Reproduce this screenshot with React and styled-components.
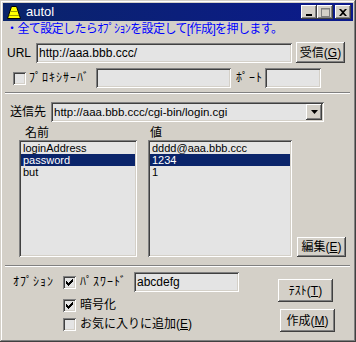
import React from 'react';
import styled, { createGlobalStyle, css } from 'styled-components';

const GlobalStyle = createGlobalStyle`
  html, body {
    margin: 0;
    padding: 0;
    background: #d4d0c8;
  }
  * {
    box-sizing: border-box;
  }
`;

const sunken = css`
  box-shadow: inset 1px 1px #808080, inset -1px -1px #ffffff,
    inset 2px 2px #404040, inset -2px -2px #d4d0c8;
`;

const raised = css`
  box-shadow: inset -1px -1px #404040, inset 1px 1px #ffffff,
    inset -2px -2px #808080, inset 2px 2px #d4d0c8;
`;

const Window = styled.div`
  width: 356px;
  height: 342px;
  padding: 3px;
  background: #d4d0c8;
  box-shadow: inset -1px -1px #404040, inset 1px 1px #d4d0c8,
    inset -2px -2px #808080, inset 2px 2px #ffffff;
  font-family: "Liberation Sans", "Noto Sans CJK JP", sans-serif;
  font-size: 12px;
  color: #000;
  display: flex;
  flex-direction: column;
`;

const TitleBar = styled.div`
  height: 18px;
  background: linear-gradient(90deg, #0a246a, #0c1a8c);
  display: flex;
  align-items: center;
  padding: 0 2px 0 3px;
  color: #fff;
`;

const TitleText = styled.span`
  margin-left: 4px;
  font-size: 13px;
  line-height: 14px;
`;

const TitleButtons = styled.div`
  margin-left: auto;
  display: flex;
  align-items: center;
`;

const TitleButton = styled.div`
  width: 16px;
  height: 14px;
  background: #d4d0c8;
  ${raised};
  margin-left: ${(p) => p.$gap || 0}px;
  display: flex;
  align-items: center;
  justify-content: center;
`;

const Row = styled.div`
  display: flex;
  align-items: ${(p) => p.$align || 'center'};
  height: ${(p) => p.$h}px;
  margin-top: ${(p) => p.$mt || 0}px;
  padding-left: ${(p) => p.$pl || 0}px;
`;

const Hint = styled.div`
  height: 21px;
  padding: 1px 0 0 3px;
  color: #0000ff;
  line-height: 14px;
  letter-spacing: -0.6px;
  white-space: nowrap;
`;

const Label = styled.span`
  width: ${(p) => (p.$w ? `${p.$w}px` : 'auto')};
  margin-left: ${(p) => p.$ml || 0}px;
  white-space: nowrap;
  line-height: 14px;
  letter-spacing: ${(p) => (p.$kana ? '1px' : '0')};
`;

const TextBox = styled.div`
  width: ${(p) => p.$w}px;
  height: ${(p) => p.$h || 20}px;
  margin-left: ${(p) => p.$ml || 0}px;
  background: #e4e4e4;
  ${sunken};
  padding: 3px 3px 0;
  line-height: 14px;
  white-space: nowrap;
  overflow: hidden;
`;

const Button = styled.div`
  width: ${(p) => p.$w}px;
  height: ${(p) => p.$h || 21}px;
  margin-left: ${(p) => p.$ml || 0}px;
  margin-top: ${(p) => p.$mt || 0}px;
  background: #d4d0c8;
  ${raised};
  display: flex;
  align-items: center;
  justify-content: center;
  white-space: nowrap;
  line-height: 14px;

  u {
    text-decoration: underline;
  }
`;

const CheckBox = styled.div`
  width: 13px;
  height: 13px;
  flex: none;
  margin-left: ${(p) => p.$ml || 0}px;
  background: #e4e4e4;
  ${sunken};
  display: flex;
  align-items: center;
  justify-content: center;
`;

const Separator = styled.div`
  width: 345px;
  height: 2px;
  margin: ${(p) => p.$mt}px 0 0 2px;
  border-top: 1px solid #808080;
  border-bottom: 1px solid #ffffff;
`;

const Combo = styled.div`
  width: 273px;
  height: 20px;
  background: #e4e4e4;
  ${sunken};
  display: flex;
  align-items: center;
  padding: 2px 2px 2px 3px;
`;

const ComboText = styled.span`
  flex: 1;
  font-size: 11.5px;
  line-height: 14px;
  white-space: nowrap;
`;

const ComboArrow = styled.div`
  width: 16px;
  height: 16px;
  background: #d4d0c8;
  ${raised};
  display: flex;
  align-items: center;
  justify-content: center;
`;

const ListBox = styled.div`
  width: ${(p) => p.$w}px;
  height: 117px;
  margin-left: ${(p) => p.$ml}px;
  background: #e4e4e4;
  ${sunken};
  padding: 2px;
`;

const ListItem = styled.div`
  height: 12px;
  font-size: 11px;
  line-height: 12px;
  padding-left: 2px;
  white-space: nowrap;
  background: ${(p) => (p.$selected ? '#0a246a' : 'transparent')};
  color: ${(p) => (p.$selected ? '#ffffff' : '#000000')};
`;

const OptionsArea = styled.div`
  display: flex;
  margin-top: 5px;
`;

const OptionsLeft = styled.div`
  width: 236px;
  padding-left: 10px;
  display: flex;
  flex-direction: column;
`;

const OptionsRight = styled.div`
  margin-left: 39px;
  padding-top: 7px;
  display: flex;
  flex-direction: column;
`;

const Check = () => (
  <svg width="7" height="7" viewBox="0 0 7 7">
    <path d="M0 2h1v1h1v1h1V3h1V2h1V1h1V0h1v3H6v1H5v1H4v1H3v1H2V6H1V5H0z" fill="#000" />
  </svg>
);

const AppIcon = () => (
  <svg width="16" height="16" viewBox="0 0 16 16">
    <path d="M5.5 2.5h5l4 12h-13z" fill="#ffff00" stroke="#000" />
    <path d="M4 7.5h8M2.8 11.5h10.4" stroke="#a0a000" />
  </svg>
);

const App = () => {
  return (
    <>
      <GlobalStyle />
      <Window>
        <TitleBar>
          <AppIcon />
          <TitleText>autol</TitleText>
          <TitleButtons>
            <TitleButton>
              <svg width="8" height="8" viewBox="0 0 8 8">
                <rect x="1" y="6" width="6" height="2" fill="#000" />
              </svg>
            </TitleButton>
            <TitleButton>
              <svg width="9" height="9" viewBox="0 0 9 9">
                <rect x="0.5" y="0.5" width="8" height="8" fill="none" stroke="#808080" />
                <rect x="0" y="0.5" width="9" height="1" fill="#808080" />
              </svg>
            </TitleButton>
            <TitleButton $gap={2}>
              <svg width="8" height="7" viewBox="0 0 8 7">
                <path d="M0 0h2l2 2 2-2h2L5 3.5 8 7H6L4 5 2 7H0l3-3.5z" fill="#000" />
              </svg>
            </TitleButton>
          </TitleButtons>
        </TitleBar>

        <Hint>・全て設定したらｵﾌﾟｼｮﾝを設定して[作成]を押します。</Hint>

        <Row $h={21} $pl={4}>
          <Label $w={29}>URL</Label>
          <TextBox $w={256}>http://aaa.bbb.ccc/</TextBox>
          <Button $w={49} $ml={4}>
            受信(<u>G</u>)
          </Button>
        </Row>

        <Row $h={20} $mt={5} $pl={10}>
          <CheckBox />
          <Label $w={67} $ml={3} $kana>
            ﾌﾟﾛｷｼｻｰﾊﾞ
          </Label>
          <TextBox $w={135} />
          <Label $w={29} $ml={5} $kana>
            ﾎﾟｰﾄ
          </Label>
          <TextBox $w={56} />
        </Row>

        <Separator $mt={4} />

        <Row $h={20} $mt={8} $pl={7}>
          <Label $w={41}>送信先</Label>
          <Combo>
            <ComboText>http://aaa.bbb.ccc/cgi-bin/login.cgi</ComboText>
            <ComboArrow>
              <svg width="7" height="4" viewBox="0 0 7 4">
                <path d="M0 0h7L3.5 4z" fill="#000" />
              </svg>
            </ComboArrow>
          </Combo>
        </Row>

        <Row $h={18} $pl={22} $align="flex-end">
          <Label $w={125}>名前</Label>
          <Label>値</Label>
        </Row>

        <Row $h={117} $pl={16} $align="flex-end">
          <ListBox $w={118} $ml={0}>
            <ListItem>loginAddress</ListItem>
            <ListItem $selected>password</ListItem>
            <ListItem>but</ListItem>
          </ListBox>
          <ListBox $w={144} $ml={11}>
            <ListItem>dddd@aaa.bbb.ccc</ListItem>
            <ListItem $selected>1234</ListItem>
            <ListItem>1</ListItem>
          </ListBox>
          <Button $w={49} $h={20} $ml={5}>
            編集(<u>E</u>)
          </Button>
        </Row>

        <Separator $mt={8} />

        <OptionsArea>
          <OptionsLeft>
            <Row $h={20}>
              <Label $w={50} $kana>
                ｵﾌﾟｼｮﾝ
              </Label>
              <CheckBox>
                <Check />
              </CheckBox>
              <Label $w={54} $ml={4} $kana>
                ﾊﾟｽﾜｰﾄﾞ
              </Label>
              <TextBox $w={105}>abcdefg</TextBox>
            </Row>
            <Row $h={16} $mt={5} $pl={50}>
              <CheckBox>
                <Check />
              </CheckBox>
              <Label $ml={4}>暗号化</Label>
            </Row>
            <Row $h={16} $mt={3} $pl={50}>
              <CheckBox />
              <Label $ml={4}>
                お気に入りに追加(<u>E</u>)
              </Label>
            </Row>
          </OptionsLeft>
          <OptionsRight>
            <Button $w={55} $h={23}>
              ﾃｽﾄ(<u>T</u>)
            </Button>
            <Button $w={55} $h={23} $ml={2} $mt={7}>
              作成(<u>M</u>)
            </Button>
          </OptionsRight>
        </OptionsArea>
      </Window>
    </>
  );
};

export default App;
